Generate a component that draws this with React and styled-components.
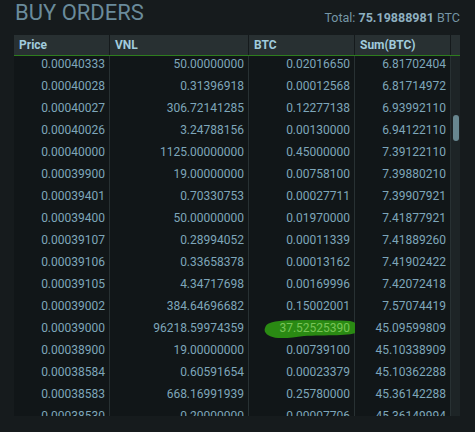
import React from "react";
import styled, { createGlobalStyle } from "styled-components";

const GlobalStyle = createGlobalStyle`
  html, body {
    margin: 0;
    padding: 0;
    background: #161b1d;
  }
  body {
    font-family: Roboto, "Liberation Sans", sans-serif;
  }
`;

const COLS = "96px 139px 106px 96px";

const Page = styled.div`
  width: 475px;
  height: 432px;
  padding: 0 15px 0 14px;
  box-sizing: border-box;
  background: #161b1d;
  overflow: hidden;
`;

const TopBar = styled.div`
  display: flex;
  justify-content: space-between;
  align-items: flex-start;
  height: 35px;
`;

const Title = styled.h2`
  margin: 0;
  padding-left: 1px;
  font-size: 22px;
  font-weight: 400;
  line-height: 26px;
  color: #6a8b9b;
`;

const Total = styled.div`
  padding-top: 10px;
  font-size: 12.5px;
  color: #7596a6;

  b {
    font-weight: 700;
    color: #8eb0c0;
  }
`;

const Panel = styled.div`
  width: 446px;
  height: 381px;
  display: flex;
  flex-direction: column;
  background: #1d2426;
`;

const HeaderRow = styled.div`
  display: grid;
  grid-template-columns: ${COLS} 1fr;
  height: 20px;
  background: #283032;
  border-bottom: 1px solid #2e7d1e;
  flex-shrink: 0;
`;

const HeadCell = styled.div`
  padding: 0 5px;
  font-size: 12px;
  font-weight: 700;
  line-height: 20px;
  color: #a1cbdc;
  border-right: 1px solid ${(p) => (p.last ? "transparent" : "#151a1c")};
`;

const Body = styled.div`
  flex: 1;
  display: flex;
  overflow: hidden;
`;

const Rows = styled.div`
  width: 437px;
  margin-top: -4px;
`;

const Row = styled.div`
  display: grid;
  grid-template-columns: ${COLS};
  height: 22px;
  box-sizing: border-box;
  border-bottom: 1px solid #283133;
`;

const Cell = styled.div`
  position: relative;
  padding: 2px 4px 0;
  text-align: right;
  font-size: 12px;
  line-height: 20px;
  color: ${(p) => (p.marked ? "#78c457" : "#7ea6ba")};
  background: #111618;
  border-right: 1px solid #283133;

  span {
    position: relative;
  }
`;

const Track = styled.div`
  flex: 1;
  display: flex;
  justify-content: center;
`;

const Thumb = styled.div`
  width: 6px;
  height: 26px;
  margin-top: 59px;
  border-radius: 3px;
  background: #688790;
`;

const Blob = styled.svg`
  position: absolute;
  left: 15px;
  top: 3px;
  width: 95px;
  height: 20px;
`;

const rows = [
  ["0.00040333", "50.00000000", "0.02016650", "6.81702404"],
  ["0.00040028", "0.31396918", "0.00012568", "6.81714972"],
  ["0.00040027", "306.72141285", "0.12277138", "6.93992110"],
  ["0.00040026", "3.24788156", "0.00130000", "6.94122110"],
  ["0.00040000", "1125.00000000", "0.45000000", "7.39122110"],
  ["0.00039900", "19.00000000", "0.00758100", "7.39880210"],
  ["0.00039401", "0.70330753", "0.00027711", "7.39907921"],
  ["0.00039400", "50.00000000", "0.01970000", "7.41877921"],
  ["0.00039107", "0.28994052", "0.00011339", "7.41889260"],
  ["0.00039106", "0.33658378", "0.00013162", "7.41902422"],
  ["0.00039105", "4.34717698", "0.00169996", "7.42072418"],
  ["0.00039002", "384.64696682", "0.15002001", "7.57074419"],
  ["0.00039000", "96218.59974359", "37.52525390", "45.09599809"],
  ["0.00038900", "19.00000000", "0.00739100", "45.10338909"],
  ["0.00038584", "0.60591654", "0.00023379", "45.10362288"],
  ["0.00038583", "668.16991939", "0.25780000", "45.36142288"],
  ["0.00038530", "0.20000000", "0.00007706", "45.36149994"],
];

const headers = ["Price", "VNL", "BTC", "Sum(BTC)"];

const Marker = () => (
  <Blob viewBox="0 0 95 20">
    <path
      d="M6 4 C14 0 60 1 86 2 C93 3 95 8 93 13 C90 17 60 16 40 17 C30 18 22 20 14 19 C5 18 -1 14 1 9 C2 6 3 5 6 4 Z"
      fill="#2a8a13"
    />
  </Blob>
);

export default function App() {
  return (
    <>
      <GlobalStyle />
      <Page>
        <TopBar>
          <Title>BUY ORDERS</Title>
          <Total>
            Total: <b>75.19888981</b> BTC
          </Total>
        </TopBar>
        <Panel>
          <HeaderRow>
            {headers.map((h) => (
              <HeadCell key={h}>{h}</HeadCell>
            ))}
            <HeadCell last />
          </HeaderRow>
          <Body>
            <Rows>
              {rows.map((r) => (
                <Row key={r[0]}>
                  {r.map((v, i) => {
                    const marked = v === "37.52525390";
                    return (
                      <Cell key={i} marked={marked}>
                        {marked && <Marker />}
                        <span>{v}</span>
                      </Cell>
                    );
                  })}
                </Row>
              ))}
            </Rows>
            <Track>
              <Thumb />
            </Track>
          </Body>
        </Panel>
      </Page>
    </>
  );
}
